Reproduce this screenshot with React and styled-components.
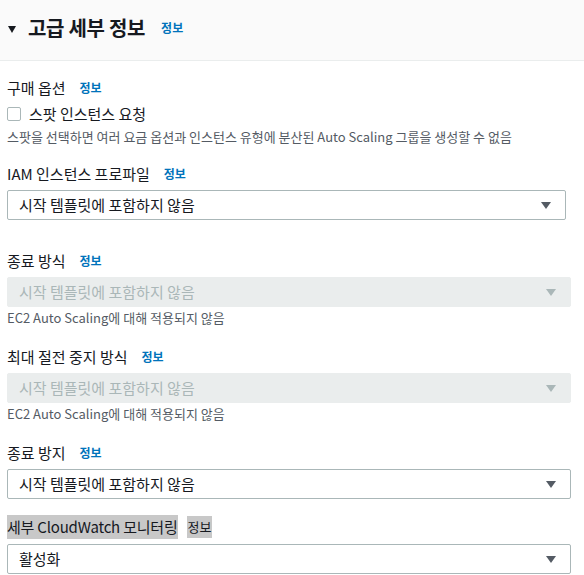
import React from "react";
import styled, { createGlobalStyle } from "styled-components";

const GlobalStyle = createGlobalStyle`
  body {
    margin: 0;
    background: #ffffff;
    font-family: "Noto Sans CJK KR", "Noto Sans", sans-serif;
    color: #16191f;
  }
`;

const Info = ({ $plain }) => <InfoLink $plain={$plain}>정보</InfoLink>;

const Select = ({ value, disabled, $wide }) => (
  <SelectBox $disabled={disabled} $wide={$wide}>
    <span>{value}</span>
    <Caret $disabled={disabled} />
  </SelectBox>
);

const App = () => {
  return (
    <>
      <GlobalStyle />
      <Page>
        <Header>
          <Toggle />
          <Title>고급 세부 정보</Title>
          <Info />
        </Header>

        <Body>
          <Field>
            <LabelRow>
              <Label>구매 옵션</Label>
              <Info />
            </LabelRow>
            <CheckRow>
              <Checkbox />
              <CheckLabel>스팟 인스턴스 요청</CheckLabel>
            </CheckRow>
            <Helper $tight>
              스팟을 선택하면 여러 요금 옵션과 인스턴스 유형에 분산된 Auto Scaling 그룹을 생성할 수 없음
            </Helper>
          </Field>

          <Field $gap={19}>
            <LabelRow>
              <Label>IAM 인스턴스 프로파일</Label>
              <Info />
            </LabelRow>
            <Select value="시작 템플릿에 포함하지 않음" />
          </Field>

          <Field $gap={31}>
            <LabelRow>
              <Label>종료 방식</Label>
              <Info />
            </LabelRow>
            <Select value="시작 템플릿에 포함하지 않음" disabled $wide />
            <Helper>EC2 Auto Scaling에 대해 적용되지 않음</Helper>
          </Field>

          <Field $gap={21}>
            <LabelRow>
              <Label>최대 절전 중지 방식</Label>
              <Info />
            </LabelRow>
            <Select value="시작 템플릿에 포함하지 않음" disabled $wide />
            <Helper>EC2 Auto Scaling에 대해 적용되지 않음</Helper>
          </Field>

          <Field $gap={21}>
            <LabelRow>
              <Label>종료 방지</Label>
              <Info />
            </LabelRow>
            <Select value="시작 템플릿에 포함하지 않음" $wide />
          </Field>

          <Field $gap={18}>
            <LabelRow $marked>
              <Label $marked>세부 CloudWatch 모니터링</Label>
              <Info $plain />
            </LabelRow>
            <Select value="활성화" $wide />
          </Field>
        </Body>
      </Page>
    </>
  );
};
export default App;

const Page = styled.div`
  width: 584px;
  height: 575px;
  overflow: hidden;
`;

const Header = styled.div`
  height: 61px;
  box-sizing: border-box;
  background: #fafafa;
  border-bottom: 1px solid #eaeded;
  display: flex;
  align-items: center;
  padding: 0 0 4px 8px;
`;

const Toggle = styled.span`
  width: 0;
  height: 0;
  border-left: 4.5px solid transparent;
  border-right: 4.5px solid transparent;
  border-top: 7px solid #16191f;
  margin-right: 12px;
  margin-top: 2px;
`;

const Title = styled.h2`
  margin: 0 16px 0 0;
  font-size: 20px;
  font-weight: 700;
  line-height: 28px;
  letter-spacing: -0.3px;
`;

const InfoLink = styled.span`
  font-size: 12px;
  font-weight: 700;
  line-height: 20px;
  color: ${(p) => (p.$plain ? "#16191f" : "#0073bb")};
  background: ${(p) => (p.$plain ? "#c8c8c8" : "transparent")};
  padding: ${(p) => (p.$plain ? "1px 1px" : "0")};
  ${(p) => (p.$plain ? "font-weight: 400; font-size: 13px;" : "")}
`;

const Body = styled.div`
  padding: 17px 13px 0 7px;
  display: flex;
  flex-direction: column;
`;

const Field = styled.div`
  display: flex;
  flex-direction: column;
  margin-top: ${(p) => p.$gap || 0}px;
`;

const LabelRow = styled.div`
  display: flex;
  align-items: center;
  gap: ${(p) => (p.$marked ? 9 : 14)}px;
  height: 20px;
  margin-bottom: ${(p) => (p.$marked ? 7 : 6)}px;
`;

const Label = styled.span`
  font-size: 15px;
  line-height: 20px;
  color: #16191f;
  background: ${(p) => (p.$marked ? "#c8c8c8" : "transparent")};
  padding: ${(p) => (p.$marked ? "2px 0" : "0")};
  ${(p) => (p.$marked ? "letter-spacing: -0.2px;" : "")}
`;

const CheckRow = styled.div`
  display: flex;
  align-items: center;
  height: 20px;
`;

const Checkbox = styled.span`
  width: 14px;
  height: 14px;
  box-sizing: border-box;
  border: 1px solid #aab7b8;
  border-radius: 2px;
  background: #fff;
  margin-right: 8px;
`;

const CheckLabel = styled.span`
  font-size: 15px;
  line-height: 20px;
`;

const Helper = styled.div`
  font-size: 13px;
  line-height: 16px;
  color: #545b64;
  margin-top: ${(p) => (p.$tight ? 5 : 3)}px;
  white-space: nowrap;
`;

const SelectBox = styled.div`
  width: ${(p) => (p.$wide ? 564 : 559)}px;
  height: 30px;
  box-sizing: border-box;
  display: flex;
  align-items: center;
  justify-content: space-between;
  padding: 0 14px 0 11px;
  border: 1px solid ${(p) => (p.$disabled ? "#eaeded" : "#aab7b8")};
  border-radius: 2px;
  background: ${(p) => (p.$disabled ? "#eaeded" : "#ffffff")};
  color: ${(p) => (p.$disabled ? "#aab7b8" : "#16191f")};
  font-size: 15px;
  line-height: 20px;
`;

const Caret = styled.span`
  width: 0;
  height: 0;
  border-left: 5px solid transparent;
  border-right: 5px solid transparent;
  border-top: 7px solid ${(p) => (p.$disabled ? "#aab7b8" : "#545b64")};
`;
